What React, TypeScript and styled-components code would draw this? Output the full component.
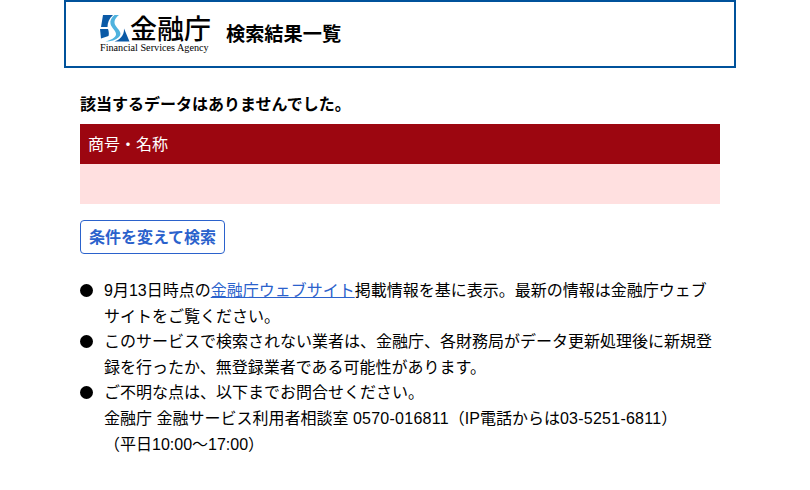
import styled, { createGlobalStyle } from 'styled-components'

const App = () => {
    return (
        <>
            <GlobalStyle />
            <Page>
                <Header>
                    <Logo>
                        <LogoTop>
                            <LogoMark viewBox="0 0 30 28" aria-hidden="true">
                                <path d="M3 1H13C9 4.5 7.5 8.5 7.5 13H1Z" fill="#0B5AA6" />
                                <path d="M0 15H8C9 18 9 20 8.5 22L1 24.5Z" fill="#0B5AA6" />
                                <path d="M14.5 1H19C14.5 4.5 13.5 8 15.5 11.5C18 15.5 23 19 19 23C16 26 11 27.5 5 27.5C11 26 15.5 24 16 20.5C16.5 17 11.5 14 10.5 10C9.7 6.5 11.5 3.5 14.5 1Z" fill="#4FB2DE" />
                                <path d="M24 14.5L29.5 27.5H14.5C19 26 24.5 22 24 14.5Z" fill="#0B5AA6" />
                            </LogoMark>
                            <LogoName>金融庁</LogoName>
                        </LogoTop>
                        <LogoSub>Financial Services Agency</LogoSub>
                    </Logo>
                    <PageTitle>検索結果一覧</PageTitle>
                </Header>
                <Content>
                    <Message>該当するデータはありませんでした。</Message>
                    <ResultTable>
                        <thead>
                            <tr>
                                <HeadCell>商号・名称</HeadCell>
                            </tr>
                        </thead>
                        <tbody>
                            <tr>
                                <BodyCell />
                            </tr>
                        </tbody>
                    </ResultTable>
                    <SearchAgain type="button">条件を変えて検索</SearchAgain>
                    <NoteList>
                        <NoteItem>
                            9月13日時点の<NoteLink href="#">金融庁ウェブサイト</NoteLink>掲載情報を基に表示。最新の情報は金融庁ウェブサイトをご覧ください。
                        </NoteItem>
                        <NoteItem>
                            このサービスで検索されない業者は、金融庁、各財務局がデータ更新処理後に新規登録を行ったか、無登録業者である可能性があります。
                        </NoteItem>
                        <NoteItem>
                            ご不明な点は、以下までお問合せください。
                            <br />
                            金融庁 金融サービス利用者相談室 <Phone>0570-016811</Phone>（IP電話からは<Phone>03-5251-6811</Phone>）
                            <br />
                            （平日10:00～17:00）
                        </NoteItem>
                    </NoteList>
                </Content>
            </Page>
        </>
    )
}
export default App

const GlobalStyle = createGlobalStyle`
    html, body {
        margin: 0;
        padding: 0;
        background: #FFFFFF;
    }
    body {
        font-family: "Liberation Sans", "Noto Sans CJK JP", sans-serif;
        color: #000000;
        font-size: 16px;
    }
`
const Page = styled.div`
    width: 800px;
`
const Header = styled.header`
    display: flex;
    align-items: center;
    box-sizing: border-box;
    width: 672px;
    height: 68px;
    margin: 0 auto;
    padding: 0 0 2px 34px;
    border: 2px solid #00529B;
    background-color: #FFFFFF;
`
const Logo = styled.div`
    display: flex;
    flex-direction: column;
    align-items: stretch;
    width: 110px;
    margin-right: 16px;
`
const LogoTop = styled.div`
    display: flex;
    align-items: center;
    height: 28px;
`
const LogoMark = styled.svg`
    width: 30px;
    height: 28px;
    flex: none;
`
const LogoName = styled.span`
    font-family: "Noto Sans CJK JP", sans-serif;
    font-size: 27px;
    font-weight: 500;
    line-height: 28px;
    white-space: nowrap;
`
const LogoSub = styled.span`
    font-family: "Liberation Serif", serif;
    font-size: 10.2px;
    line-height: 11px;
    white-space: nowrap;
`
const PageTitle = styled.h1`
    margin: 0;
    font-family: "Noto Sans CJK JP", sans-serif;
    font-size: 19.2px;
    font-weight: 700;
    line-height: 28px;
`
const Content = styled.main`
    width: 640px;
    margin: 0 auto;
`
const Message = styled.p`
    margin: 25px 0 0;
    font-weight: 700;
    line-height: 24px;
`
const ResultTable = styled.table`
    width: 100%;
    margin-top: 7px;
    border-collapse: collapse;
`
const HeadCell = styled.th`
    box-sizing: border-box;
    height: 40px;
    padding: 0 8px 2px;
    background-color: #9C0610;
    color: #FFFFFF;
    font-weight: 400;
    text-align: left;
`
const BodyCell = styled.td`
    height: 40px;
    padding: 0;
    background-color: #FFE0E0;
`
const SearchAgain = styled.button`
    display: block;
    box-sizing: border-box;
    width: 145px;
    height: 34px;
    margin-top: 16px;
    padding: 0 0 2px;
    border: 1px solid #2B62CC;
    border-radius: 4px;
    background-color: #FFFFFF;
    color: #2B62CC;
    font-family: inherit;
    font-size: 16px;
    font-weight: 700;
`
const NoteList = styled.ul`
    margin: 24px 0 0;
    padding: 0;
    list-style: none;
`
const NoteItem = styled.li`
    position: relative;
    padding-left: 24px;
    line-height: 25.6px;

    &::before {
        content: "";
        position: absolute;
        left: 0;
        top: 6px;
        width: 13px;
        height: 13px;
        border-radius: 50%;
        background-color: #000000;
    }
`
const NoteLink = styled.a`
    color: #2B62CC;
    text-decoration: underline;
`
const Phone = styled.span`
    letter-spacing: 0.25px;
`
